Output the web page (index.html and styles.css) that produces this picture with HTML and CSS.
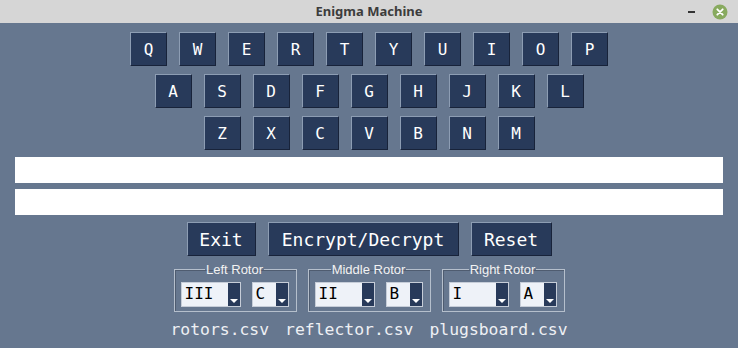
FILE: index.html
```html
<!DOCTYPE html>
<html lang="en">
<head>
<meta charset="utf-8">
<title>Enigma Machine</title>
<link rel="stylesheet" href="styles.css">
</head>
<body>
<div class="window">
  <header class="titlebar">
    <span class="title">Enigma Machine</span>
    <div class="controls">
      <span class="minimize"></span>
      <span class="close">
        <svg width="16" height="16" viewBox="0 0 16 16"><circle cx="8" cy="8" r="7.5" fill="#88aa5f"/><path d="M5.3 5.3 L10.7 10.7 M10.7 5.3 L5.3 10.7" stroke="#fff" stroke-width="1.8" stroke-linecap="round"/></svg>
      </span>
    </div>
  </header>
  <main class="main">
    <div class="keyboard">
      <div class="row">
        <button class="key">Q</button><button class="key">W</button><button class="key">E</button><button class="key">R</button><button class="key">T</button><button class="key">Y</button><button class="key">U</button><button class="key">I</button><button class="key">O</button><button class="key">P</button>
      </div>
      <div class="row">
        <button class="key">A</button><button class="key">S</button><button class="key">D</button><button class="key">F</button><button class="key">G</button><button class="key">H</button><button class="key">J</button><button class="key">K</button><button class="key">L</button>
      </div>
      <div class="row">
        <button class="key">Z</button><button class="key">X</button><button class="key">C</button><button class="key">V</button><button class="key">B</button><button class="key">N</button><button class="key">M</button>
      </div>
    </div>
    <div class="entries">
      <input class="entry" type="text">
      <input class="entry" type="text">
    </div>
    <div class="actions">
      <button class="action exit">Exit</button>
      <button class="action crypt">Encrypt/Decrypt</button>
      <button class="action reset">Reset</button>
    </div>
    <div class="rotors">
      <fieldset class="group">
        <legend>Left Rotor</legend>
        <div class="combo wide"><span class="value">III</span><span class="arrow"></span></div>
        <div class="combo narrow"><span class="value">C</span><span class="arrow"></span></div>
      </fieldset>
      <fieldset class="group">
        <legend>Middle Rotor</legend>
        <div class="combo wide"><span class="value">II</span><span class="arrow"></span></div>
        <div class="combo narrow"><span class="value">B</span><span class="arrow"></span></div>
      </fieldset>
      <fieldset class="group">
        <legend>Right Rotor</legend>
        <div class="combo wide"><span class="value">I</span><span class="arrow"></span></div>
        <div class="combo narrow"><span class="value">A</span><span class="arrow"></span></div>
      </fieldset>
    </div>
    <div class="files">
      <span class="file">rotors.csv</span>
      <span class="file">reflector.csv</span>
      <span class="file">plugsboard.csv</span>
    </div>
  </main>
</div>
</body>
</html>
```

FILE: styles.css
```css
* { box-sizing: border-box; }
html, body { margin: 0; padding: 0; }
body {
  width: 738px;
  height: 348px;
  background: #66778f;
  overflow: hidden;
}
.window {
  display: flex;
  flex-direction: column;
}
.titlebar {
  height: 23px;
  background: #d6d6d6;
  display: flex;
  align-items: center;
  justify-content: center;
  position: relative;
}
.title {
  font-family: "Noto Sans", "Open Sans", sans-serif;
  font-weight: bold;
  font-size: 13px;
  color: #3c3c3c;
  line-height: 23px;
}
.controls {
  position: absolute;
  right: 10px;
  top: 4px;
  display: flex;
  align-items: center;
  gap: 17px;
}
.minimize {
  width: 7px;
  height: 2px;
  background: #333;
}
.close { width: 16px; height: 16px; display: block; }
.close svg { display: block; }

.main {
  display: flex;
  flex-direction: column;
  align-items: center;
  padding-top: 9px;
}
.keyboard {
  display: flex;
  flex-direction: column;
  gap: 8px;
}
.row {
  display: flex;
  justify-content: center;
  gap: 12px;
}
.key, .action {
  background: #283a5a;
  color: #ffffff;
  border: 1px solid;
  border-color: #8d9db3 #18233a #18233a #8d9db3;
  font-family: "DejaVu Sans Mono", monospace;
  padding: 0;
  margin: 0;
  height: 34px;
}
.key {
  width: 37px;
  font-size: 16px;
}
.entries {
  align-self: stretch;
  display: flex;
  flex-direction: column;
  gap: 6px;
  margin: 7px 15px 0 15px;
}
.entry {
  display: block;
  height: 26px;
  width: 100%;
  border: none;
  background: #ffffff;
  outline: none;
  margin: 0;
}
.actions {
  display: flex;
  gap: 12px;
  margin-top: 7px;
}
.action {
  font-size: 18px;
}
.exit { width: 69px; }
.crypt { width: 191px; }
.reset { width: 81px; }

.rotors {
  display: flex;
  gap: 11px;
  margin-top: 6px;
}
.group {
  margin: 0;
  border: 1px solid #b5bfcc;
  box-shadow: inset 1px 1px 0 #4f5c70;
  padding: 5px 7px 4px 6px;
  display: flex;
  gap: 11px;
  min-width: 0;
}
.group legend {
  font-family: "Liberation Sans", Arial, sans-serif;
  font-size: 13px;
  color: #f2f2f2;
  padding: 0 1px;
  margin: 0 auto;
  line-height: 15px;
}
.combo {
  height: 25px;
  background: #eef2f8;
  border: 1px solid #c6cdd8;
  display: flex;
  align-items: stretch;
  padding: 0;
}
.combo.wide { width: 60px; }
.combo.narrow { width: 37px; }
.value {
  flex: 1;
  font-family: "DejaVu Sans Mono", monospace;
  font-size: 16px;
  color: #000;
  line-height: 21px;
  padding-left: 3px;
}
.arrow {
  width: 12px;
  background: #283a5a;
  position: relative;
  margin: 0;
}
.arrow::after {
  content: "";
  position: absolute;
  left: 2px;
  bottom: 3px;
  border-left: 4px solid transparent;
  border-right: 4px solid transparent;
  border-top: 4px solid #ffffff;
}
.files {
  display: flex;
  gap: 16px;
  margin-top: 8px;
}
.file {
  font-family: "DejaVu Sans Mono", monospace;
  font-size: 16.4px;
  color: #eef0f4;
  line-height: 19px;
}
```
